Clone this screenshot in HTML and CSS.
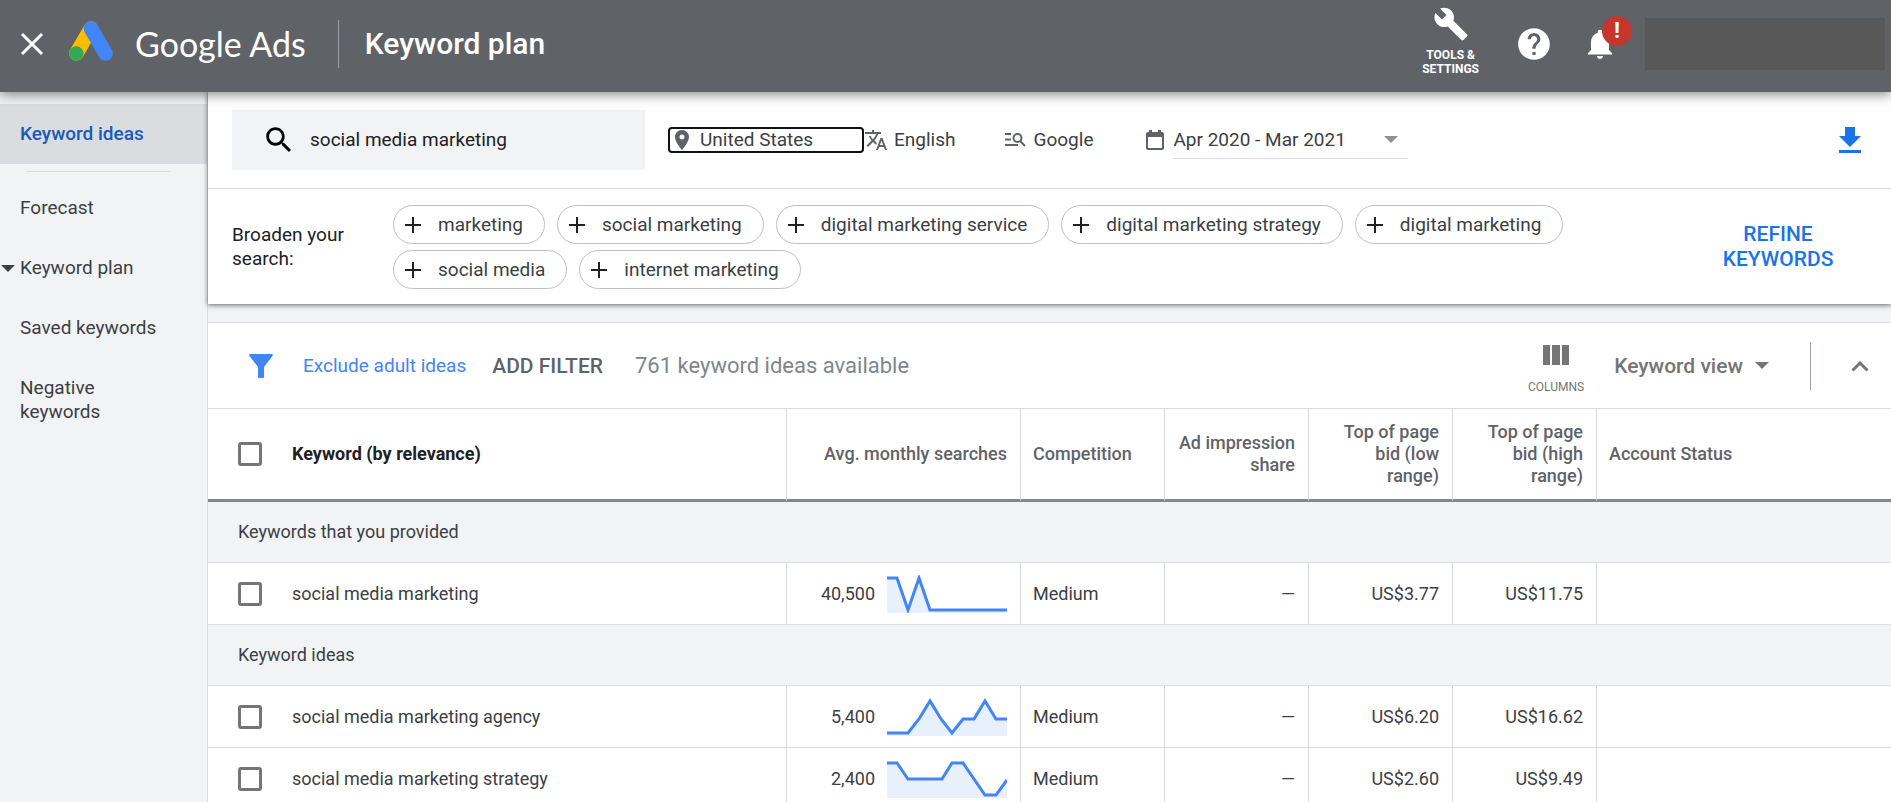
FILE: index.html
```html
<!DOCTYPE html>
<html lang="en">

<head>
    <meta charset="UTF-8">
    <meta name="viewport" content="width=device-width, initial-scale=1.0">
    <title>Keyword plan - Google Ads</title>
    <link rel="stylesheet" href="styles.css">
</head>

<body>
    <!-- Top bar -->
    <header class="topbar">
        <button class="icon-btn close-btn" aria-label="Close">
            <svg width="24" height="24" viewBox="0 0 24 24"><path d="M2 2l20 20M22 2L2 22" stroke="#fff" stroke-width="3" fill="none"/></svg>
        </button>
        <svg class="logo" width="44" height="40" viewBox="0 0 44 40">
            <path d="M22 7.500L7.300 32.500" stroke="#fbbc04" stroke-width="14.600" stroke-linecap="round"/>
            <path d="M22 7.500l14.500 25" stroke="#4285f4" stroke-width="14.600" stroke-linecap="round"/>
            <circle cx="7.300" cy="32.600" r="7.300" fill="#34a853"/>
        </svg>
        <span class="brand">Google Ads</span>
        <h1 class="page-title">Keyword plan</h1>
        <div class="topbar-right">
            <button class="tools-btn">
                <svg width="36" height="36" viewBox="0 0 24 24"><path fill="#fff" d="M22.7 19l-9.1-9.1c.9-2.3.4-5-1.5-6.9-2-2-5-2.4-7.4-1.3L9 6 6 9 1.6 4.7C.4 7.1.9 10.1 2.9 12.1c1.9 1.9 4.6 2.4 6.9 1.5l9.1 9.1c.4.4 1 .4 1.4 0l2.3-2.3c.5-.4.5-1.1.1-1.4z"/></svg>
                <span>TOOLS &amp;<br>SETTINGS</span>
            </button>
            <button class="icon-btn help-btn" aria-label="Help">
                <svg width="38" height="38" viewBox="0 0 24 24"><path fill="#fff" d="M12 2C6.48 2 2 6.48 2 12s4.48 10 10 10 10-4.48 10-10S17.52 2 12 2zm1 17h-2v-2h2v2zm2.07-7.75l-.9.92C13.45 12.9 13 13.5 13 15h-2v-.5c0-1.1.45-2.1 1.17-2.83l1.24-1.26c.37-.36.59-.86.59-1.41 0-1.1-.9-2-2-2s-2 .9-2 2H8c0-2.21 1.79-4 4-4s4 1.79 4 4c0 .88-.36 1.68-.93 2.25z"/></svg>
            </button>
            <button class="icon-btn bell-btn" aria-label="Notifications">
                <svg width="36" height="36" viewBox="0 0 24 24"><path fill="#fff" d="M12 22c1.1 0 2-.9 2-2h-4c0 1.1.89 2 2 2zm6-6v-5c0-3.07-1.64-5.64-4.5-6.32V4c0-.83-.67-1.5-1.5-1.5s-1.500.67-1.500 1.500v.68C7.630 5.360 6 7.920 6 11v5l-2 2v1h16v-1l-2-2z"/></svg>
                <span class="badge">!</span>
            </button>
            <div class="account"></div>
        </div>
    </header>

    <div class="layout">
        <!-- Side navigation -->
        <nav class="sidebar">
            <a href="#" class="active">Keyword ideas</a>
            <hr>
            <a href="#">Forecast</a>
            <a href="#" class="expandable">Keyword plan</a>
            <a href="#">Saved keywords</a>
            <a href="#">Negative keywords</a>
        </nav>

        <main class="content">
            <!-- Search panel -->
            <section class="search-panel">
                <div class="search-row">
                    <label class="search-box">
                        <svg width="34" height="34" viewBox="0 0 24 24"><path fill="#000" d="M15.500 14h-.79l-.28-.27C15.410 12.590 16 11.110 16 9.500 16 5.910 13.090 3 9.500 3S3 5.910 3 9.500 5.910 16 9.500 16c1.610 0 3.090-.59 4.230-1.570l.27.28v.79l5 4.990L20.490 19l-4.990-5zm-6 0C7.010 14 5 11.990 5 9.500S7.010 5 9.500 5 14 7.010 14 9.500 11.990 14 9.500 14z"/></svg>
                        <input type="text" value="social media marketing" aria-label="Keywords">
                    </label>
                    <button class="setting location">
                        <svg width="24" height="24" viewBox="0 0 24 24"><path fill="#5f6368" d="M12 2C8.130 2 5 5.130 5 9c0 5.250 7 13 7 13s7-7.750 7-13c0-3.870-3.130-7-7-7zm0 9.500c-1.380 0-2.500-1.120-2.500-2.500s1.120-2.500 2.500-2.500 2.500 1.120 2.500 2.500-1.120 2.500-2.500 2.500z"/></svg>
                        United States
                    </button>
                    <button class="setting language">
                        <svg width="24" height="24" viewBox="0 0 24 24"><path fill="#5f6368" d="M12.870 15.070l-2.540-2.510.03-.03c1.740-1.940 2.980-4.170 3.710-6.530H17V4h-7V2H8v2H1v1.990h11.170C11.500 7.920 10.440 9.750 9 11.350 8.070 10.320 7.300 9.190 6.690 8h-2c.73 1.630 1.730 3.170 2.980 4.560l-5.090 5.020L4 19l5-5 3.110 3.110.76-2.040zM18.500 10h-2L12 22h2l1.120-3h4.750L21 22h2l-4.500-12zm-2.620 7l1.620-4.330L19.120 17h-3.240z"/></svg>
                        English
                    </button>
                    <button class="setting network">
                        <svg width="24" height="24" viewBox="0 0 24 24" fill="none" stroke="#5f6368" stroke-width="2"><path d="M2 6h6M2 11.500h6M2 17h13M17 13l5 5"/><circle cx="14.500" cy="10" r="4"/></svg>
                        Google
                    </button>
                    <div class="dates">
                        <svg width="24" height="24" viewBox="0 0 24 24"><path fill="#5f6368" d="M19 4h-1V2h-3v2H9V2H6v2H5c-1.100 0-2 .9-2 2v14c0 1.100.9 2 2 2h14c1.100 0 2-.9 2-2V6c0-1.100-.9-2-2-2zm0 16H5V9h14v11z"/></svg>
                        <button class="date-btn">Apr 2020 - Mar 2021 <span class="caret"></span></button>
                    </div>
                    <button class="icon-btn download-btn" aria-label="Download keyword ideas">
                        <svg width="22" height="26" viewBox="0 0 22 26"><path fill="#1a73e8" d="M6 0h10v9h6L11 20 0 9h6zM0 23h22v3H0z"/></svg>
                    </button>
                </div>

                <div class="broaden-row">
                    <p class="broaden-label">Broaden your search:</p>
                    <div class="chips">
                        <button class="chip">marketing</button>
                        <button class="chip">social marketing</button>
                        <button class="chip">digital marketing service</button>
                        <button class="chip">digital marketing strategy</button>
                        <button class="chip">digital marketing</button>
                        <button class="chip">social media</button>
                        <button class="chip">internet marketing</button>
                    </div>
                    <button class="refine-btn">REFINE KEYWORDS</button>
                </div>
            </section>

            <!-- Results -->
            <section class="results">
                <div class="toolbar">
                    <svg class="filter-icon" width="24" height="24" viewBox="0 0 24 24"><path fill="#4285f4" d="M1 0h22c1 0 1 1 .5 2L15 13v10c0 .6-.4 1-1 1h-4c-.6 0-1-.4-1-1V13L.5 2C0 1 0 0 1 0z"/></svg>
                    <a href="#" class="filter-link">Exclude adult ideas</a>
                    <button class="add-filter">ADD FILTER</button>
                    <span class="count">761 keyword ideas available</span>
                    <div class="toolbar-right">
                        <button class="columns-btn">
                            <svg width="26" height="20" viewBox="0 0 26 20"><path fill="#757575" d="M0 0h7v20H0zM9 0h8v20H9zM19 0h7v20h-7z"/></svg>
                            COLUMNS
                        </button>
                        <button class="view-btn">Keyword view <span class="caret"></span></button>
                        <button class="icon-btn collapse-btn" aria-label="Collapse">
                            <svg width="18" height="12" viewBox="0 0 18 12"><path d="M1.500 10.500L9 3l7.500 7.500" stroke="#757575" stroke-width="3" fill="none"/></svg>
                        </button>
                    </div>
                </div>

                <table>
                    <colgroup>
                        <col class="col-check">
                        <col class="col-keyword">
                        <col class="col-searches">
                        <col class="col-metric">
                        <col class="col-metric">
                        <col class="col-metric">
                        <col class="col-metric">
                        <col>
                    </colgroup>
                    <thead>
                        <tr>
                            <th class="check"><input type="checkbox" aria-label="Select all"></th>
                            <th class="sorted">Keyword (by relevance)</th>
                            <th class="num">Avg. monthly searches</th>
                            <th>Competition</th>
                            <th class="num">Ad impression share</th>
                            <th class="num">Top of page bid (low range)</th>
                            <th class="num">Top of page bid (high range)</th>
                            <th>Account Status</th>
                        </tr>
                    </thead>
                    <tbody>
                        <tr class="group">
                            <td colspan="8">Keywords that you provided</td>
                        </tr>
                        <tr>
                            <td class="check"><input type="checkbox" aria-label="social media marketing"></td>
                            <td>social media marketing</td>
                            <td>
                                <div class="searches">40,500
                                    <svg class="spark" viewBox="0 0 120 38"><path class="area" d="M0 3h10l11 32L32 3l11 32h77v3H0z"/><path class="line" d="M0 3h10l11 32L32 3l11 32h77"/></svg>
                                </div>
                            </td>
                            <td>Medium</td>
                            <td class="num">—</td>
                            <td class="num">US$3.77</td>
                            <td class="num">US$11.75</td>
                            <td></td>
                        </tr>
                        <tr class="group">
                            <td colspan="8">Keyword ideas</td>
                        </tr>
                        <tr>
                            <td class="check"><input type="checkbox" aria-label="social media marketing agency"></td>
                            <td>social media marketing agency</td>
                            <td>
                                <div class="searches">5,400
                                    <svg class="spark" viewBox="0 0 120 38"><path class="area" d="M0 35h21l11-14L43 3l11 18 11 14 11-14h11L98 3l11 18h11v17H0z"/><path class="line" d="M0 35h21l11-14L43 3l11 18 11 14 11-14h11L98 3l11 18h11"/></svg>
                                </div>
                            </td>
                            <td>Medium</td>
                            <td class="num">—</td>
                            <td class="num">US$6.20</td>
                            <td class="num">US$16.62</td>
                            <td></td>
                        </tr>
                        <tr>
                            <td class="check"><input type="checkbox" aria-label="social media marketing strategy"></td>
                            <td>social media marketing strategy</td>
                            <td>
                                <div class="searches">2,400
                                    <svg class="spark" viewBox="0 0 120 38"><path class="area" d="M0 3h10l11 16h34L65 3h11l22 32h11l11-15v18H0z"/><path class="line" d="M0 3h10l11 16h34L65 3h11l22 32h11l11-15"/></svg>
                                </div>
                            </td>
                            <td>Medium</td>
                            <td class="num">—</td>
                            <td class="num">US$2.60</td>
                            <td class="num">US$9.49</td>
                            <td></td>
                        </tr>
                    </tbody>
                </table>
            </section>
        </main>
    </div>
</body>

</html>
```
FILE: styles.css
```css
* {
    margin: 0;
    padding: 0;
    box-sizing: border-box;
}

body {
    display: flex;
    flex-direction: column;
    height: 100vh;
    font-family: Roboto, sans-serif;
    font-size: 19px;
    line-height: 24px;
    color: #3c4043;
    background-color: #f1f3f4;
    overflow: hidden;
}

button {
    font: inherit;
    color: inherit;
    background: none;
    border: none;
    cursor: pointer;
}

svg {
    flex-shrink: 0;
}

.icon-btn {
    display: flex;
    align-items: center;
    justify-content: center;
}

/* Top bar */
.topbar {
    position: relative;
    z-index: 2;
    flex-shrink: 0;
    display: flex;
    align-items: center;
    height: 92px;
    padding: 0 6px 4px 20px;
    background-color: #5f6368;
    color: #fff;
    box-shadow: 0 2px 12px rgba(0, 0, 0, 0.5);
}

.logo {
    margin-left: 25px;
    margin-bottom: 6px;
}

.brand {
    margin-left: 22px;
    font-family: Lato, Roboto, sans-serif;
    font-size: 34px;
    line-height: 48px;
}

.page-title {
    margin-left: 32px;
    padding-left: 26px;
    border-left: 1px solid #9aa0a6;
    font-size: 30px;
    font-weight: 500;
    line-height: 48px;
}

.topbar-right {
    display: flex;
    align-items: center;
    margin-left: auto;
}

.tools-btn {
    display: flex;
    flex-direction: column;
    align-items: center;
    gap: 6px;
    padding-bottom: 6px;
    font-size: 12px;
    font-weight: 700;
    line-height: 14px;
}

.help-btn {
    margin-left: 36px;
}

.bell-btn {
    position: relative;
    margin-left: 29px;
}

.badge {
    position: absolute;
    top: -10px;
    right: -14px;
    width: 30px;
    height: 30px;
    border-radius: 50%;
    background-color: #c5372c;
    font-size: 22px;
    font-weight: 700;
    line-height: 30px;
}

.account {
    width: 240px;
    height: 52px;
    margin-left: 27px;
    background-color: #585858;
}

.layout {
    display: flex;
    flex: 1;
    min-height: 0;
}

/* Sidebar */
.sidebar {
    flex-shrink: 0;
    width: 208px;
    padding-top: 12px;
    border-right: 1px solid #dadce0;
}

.sidebar a {
    position: relative;
    display: block;
    padding: 18px 44px 18px 20px;
    color: #3c4043;
    text-decoration: none;
}

.sidebar a.active {
    background-color: #dadce0;
    color: #185abc;
    font-weight: 500;
}

.sidebar hr {
    margin: 7px 37px 6px 26px;
    border: none;
    border-top: 1px solid #dadce0;
}

.sidebar a.expandable::before {
    content: "";
    position: absolute;
    top: 27px;
    left: 1px;
    border: 7px solid transparent;
    border-top-color: #3c4043;
    border-bottom: none;
}

/* Search panel */
.content {
    flex: 1;
    min-width: 0;
}

.search-panel {
    position: relative;
    background-color: #fff;
    box-shadow: 0 1px 5px rgba(0, 0, 0, 0.6);
}

.search-row {
    display: flex;
    align-items: center;
    height: 97px;
    padding: 0 30px 0 24px;
    border-bottom: 1px solid #dadce0;
}

.search-box {
    display: flex;
    align-items: center;
    gap: 14px;
    width: 413px;
    height: 60px;
    padding: 0 30px;
    background-color: #f1f3f4;
}

.search-box input {
    width: 100%;
    border: none;
    outline: none;
    background: none;
    font: inherit;
    color: #202124;
}

.setting {
    display: flex;
    align-items: center;
    gap: 6px;
}

.location {
    width: 196px;
    height: 26px;
    margin-left: 23px;
    border: 2px solid #101010;
    border-radius: 4px;
}

.network {
    margin-left: 48px;
}

.dates {
    display: flex;
    align-items: center;
    gap: 6px;
    margin-left: 50px;
}

.date-btn {
    display: flex;
    align-items: center;
    justify-content: space-between;
    width: 235px;
    height: 38px;
    padding-right: 10px;
    border-bottom: 1px solid #dadce0;
}

.caret {
    border: 7px solid transparent;
    border-top-color: #8f9194;
    border-bottom: none;
}

.download-btn {
    margin-left: auto;
}

.broaden-row {
    display: flex;
    align-items: center;
    padding: 16px 50px 15px 24px;
}

.broaden-label {
    width: 161px;
    padding-right: 30px;
    color: #202124;
}

.chips {
    display: flex;
    flex: 1;
    flex-wrap: wrap;
    gap: 6px 12px;
}

.chip {
    height: 39px;
    padding: 0 21px 0 44px;
    border: 1px solid #bdc1c6;
    border-radius: 20px;
    background: linear-gradient(#202124, #202124) 11px center / 16px 2px no-repeat,
        linear-gradient(#202124, #202124) 18px center / 2px 16px no-repeat;
    color: #3c4043;
}

.refine-btn {
    width: 126px;
    color: #1a73e8;
    font-size: 21px;
    font-weight: 500;
    line-height: 25px;
}

/* Results */
.results {
    margin-top: 18px;
    border-top: 1px solid #dadce0;
    background-color: #fff;
}

.toolbar {
    display: flex;
    align-items: center;
    height: 86px;
    padding: 0 22px 0 41px;
    border-bottom: 1px solid #dadce0;
}

.filter-link {
    margin-left: 30px;
    color: #4285f4;
    text-decoration: none;
}

.add-filter {
    margin-left: 26px;
    color: #5f6368;
    font-size: 21px;
    font-weight: 500;
}

.count {
    margin-left: 32px;
    color: #80868b;
    font-size: 22px;
}

.toolbar-right {
    display: flex;
    align-items: center;
    margin-left: auto;
    color: #757575;
}

.columns-btn {
    display: flex;
    flex-direction: column;
    align-items: center;
    gap: 10px;
    padding-top: 12px;
    font-size: 12px;
}

.view-btn {
    display: flex;
    align-items: center;
    gap: 12px;
    margin-left: 30px;
    font-size: 21px;
    font-weight: 500;
}

.view-btn .caret {
    border-top-color: #757575;
}

.collapse-btn {
    height: 48px;
    margin-left: 41px;
    padding-left: 40px;
    border-left: 1px solid #9aa0a6;
}

/* Keyword table */
table {
    width: 100%;
    border-collapse: separate;
    border-spacing: 0;
    table-layout: fixed;
    font-size: 18px;
    line-height: 22px;
}

.col-check {
    width: 71px;
}

.col-keyword {
    width: 507px;
}

.col-searches {
    width: 234px;
}

.col-metric {
    width: 144px;
}

th,
td {
    padding: 0 13px 0 12px;
    border-left: 1px solid #dadce0;
    text-align: left;
}

th {
    height: 93px;
    border-bottom: 3px solid #80868b;
    color: #5f6368;
    font-weight: 500;
}

td {
    height: 62px;
    border-bottom: 1px solid #dadce0;
}

th.sorted {
    color: #202124;
    font-weight: 700;
}

th:nth-child(-n+2),
td:nth-child(-n+2) {
    border-left: none;
}

.check {
    padding: 0 0 0 30px;
}

.check + * {
    padding-left: 13px;
}

.num {
    text-align: right;
}

.group td {
    height: 61px;
    padding-left: 30px;
    background-color: #f1f3f4;
}

input[type="checkbox"] {
    appearance: none;
    display: block;
    width: 24px;
    height: 24px;
    border: 3px solid #757575;
    border-radius: 3px;
}

.searches {
    display: flex;
    align-items: center;
    justify-content: flex-end;
    gap: 12px;
}

.spark {
    width: 120px;
    height: 38px;
}

.spark .area {
    fill: #e8f0fe;
}

.spark .line {
    fill: none;
    stroke: #4285f4;
    stroke-width: 3;
}
```
